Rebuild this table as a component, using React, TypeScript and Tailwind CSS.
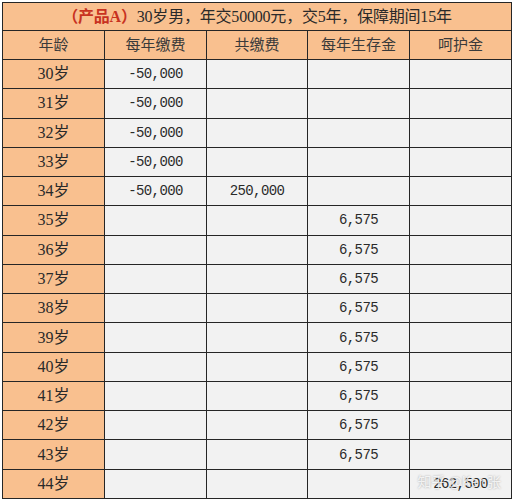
const ages = Array.from({ length: 15 }, (_, i) => 30 + i);

const label = { fontFamily: '"Liberation Serif", "Noto Sans CJK SC", serif' };
const num = { fontFamily: '"Liberation Mono", "Noto Sans CJK SC", monospace' };

function rowData(age: number) {
  const pay = age <= 34 ? '-50,000' : '';
  const total = age === 34 ? '250,000' : '';
  const live = age >= 35 && age <= 43 ? '6,575' : '';
  const care = age === 44 ? '262,500' : '';
  return [pay, total, live, care];
}

export default function App() {
  return (
    <div className="w-[514px] h-[500px] bg-white pt-[2px] pl-[2px] text-[#2a2a2a]">
      <div className="relative w-[510px] bg-[#262626] border border-[#262626] flex flex-col gap-px">
        <div
          className="h-[27px] bg-[#f9c08f] flex items-center justify-center text-[16px] tracking-[-0.2px]"
          style={label}
        >
          <span className="text-[#c8321f] font-bold">（产品A）</span>
          <span>30岁男，年交50000元，交5年，保障期间15年</span>
        </div>
        <div className="grid grid-cols-[101px_101px_100px_101px_101px] gap-px h-[28px]">
          {['年龄', '每年缴费', '共缴费', '每年生存金', '呵护金'].map((h) => (
            <div key={h} className="bg-[#f9c08f] flex items-center justify-center text-[15px] text-[#3a3a3a]" style={label}>
              {h}
            </div>
          ))}
        </div>
        {ages.map((age) => (
          <div key={age} className="grid grid-cols-[101px_101px_100px_101px_101px] gap-px h-[28.27px]">
            <div className="bg-[#f9c08f] flex items-center justify-center text-[16px]" style={label}>
              {age}岁
            </div>
            {rowData(age).map((v, i) => (
              <div
                key={i}
                className="bg-[#f2f2f2] flex items-center justify-center text-[14px] tracking-[-0.6px] pt-[1px]"
                style={num}
              >
                {v}
              </div>
            ))}
          </div>
        ))}
        <span
          className="absolute right-[10px] bottom-[6px] text-[14px] text-white/80 [text-shadow:0_0_2px_rgba(0,0,0,0.35)]"
          style={{ fontFamily: '"Noto Sans CJK SC", "Liberation Sans", sans-serif' }}
        >
          知乎 @Ken张
        </span>
      </div>
    </div>
  );
}
